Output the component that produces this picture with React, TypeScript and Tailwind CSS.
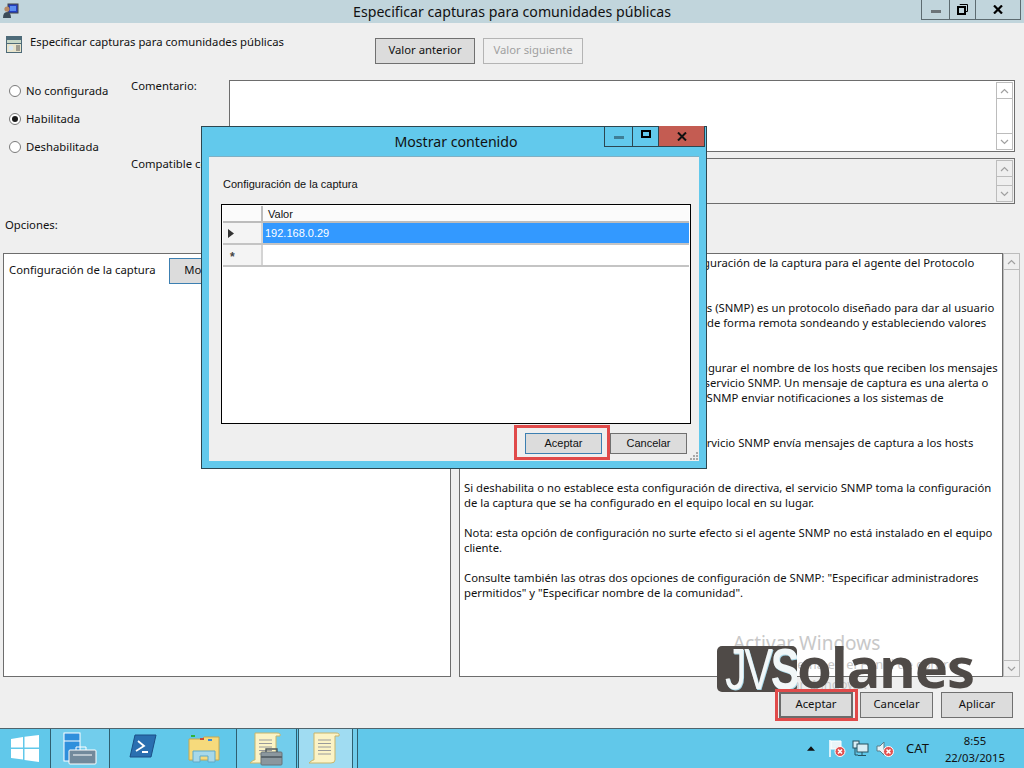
import React from "react";

const F = "[font-family:'Noto_Sans',sans-serif]";

function Chevron({ up }: { up?: boolean }) {
  return (
    <svg width="9" height="6" viewBox="0 0 9 6" fill="none" stroke="#a0a0a0" strokeWidth="1.2">
      <path d={up ? "M1 5 L4.5 1.5 L8 5" : "M1 1 L4.5 4.5 L8 1"} />
    </svg>
  );
}

function ScrollBar({ mid }: { mid?: string }) {
  return (
    <div className="flex h-full w-[17px] flex-col border border-[#bcbcbc]">
      <div className="flex h-[16px] shrink-0 items-center justify-center border-b border-[#bcbcbc]"><Chevron up /></div>
      <div className={`flex-1 ${mid ?? ""}`} />
      <div className="flex h-[16px] shrink-0 items-center justify-center border-t border-[#bcbcbc]"><Chevron /></div>
    </div>
  );
}

function Radio({ label, on }: { label: string; on?: boolean }) {
  return (
    <div className="flex h-[28px] items-center">
      <div className="ml-[9px] flex h-[12px] w-[12px] items-center justify-center rounded-full border border-[#7a7a7a] bg-white">
        {on && <div className="h-[6px] w-[6px] rounded-full bg-[#1a1a1a]" />}
      </div>
      <span className="ml-[5px] text-[11.3px]">{label}</span>
    </div>
  );
}

function Btn({ label, w, h = "h-[26px]", cls = "border-[#707070]" }: { label: string; w: string; h?: string; cls?: string }) {
  return (
    <div className={`flex ${w} ${h} shrink-0 items-center justify-center border bg-[#dcdcdc] pb-[1px] text-[11.3px] ${cls}`}>
      {label}
    </div>
  );
}

function Shield() {
  return (
    <g>
      <circle cx="0" cy="0" r="5" fill="#e2504f" stroke="#fff" strokeWidth="1" />
      <path d="M-2 -2 L2 2 M2 -2 L-2 2" stroke="#fff" strokeWidth="1.6" />
    </g>
  );
}

function ScriptIcon({ tool }: { tool?: boolean }) {
  return (
    <svg width="38" height="34" viewBox="0 0 38 34">
      <path d="M7 1 H29 Q33 1 32 4 H28 V28 Q28 31 24 31 H2 Q4 29 6 28 H7 Z" fill="#fbf3c6" stroke="#c9b56a" strokeWidth="1" />
      <path d="M11 8H24M11 11.5H24M11 15H24M11 18.5H24M11 22H24" stroke="#9a9a9a" strokeWidth="1" />
      {tool && (
        <g>
          <rect x="13" y="20" width="21" height="13" rx="1" fill="#8b979e" stroke="#687379" />
          <path d="M18 20 V17 H29 V20" fill="none" stroke="#4e575d" strokeWidth="1.4" />
          <rect x="13" y="24" width="21" height="2" fill="#5a656c" />
        </g>
      )}
    </svg>
  );
}

const descLines: (string | null)[] = [
  "La opción de directiva permite definir la configuración de la captura para el agente del Protocolo",
  "simple de administración de redes.",
  null,
  "El Protocolo simple de administración de redes (SNMP) es un protocolo diseñado para dar al usuario",
  "la capacidad de gestionar sitios y dispositivos de forma remota sondeando y estableciendo valores",
  "de terminales.",
  null,
  "La configuración de directivas le permite configurar el nombre de los hosts que reciben los mensajes",
  "de capturas de la comunidad enviados por el servicio SNMP. Un mensaje de captura es una alerta o",
  "un evento significativo que permite al agente SNMP enviar notificaciones a los sistemas de",
  "administración.",
  null,
  "Si habilita esa configuración de directiva, el servicio SNMP envía mensajes de captura a los hosts",
  "de la comunidad pública.",
  null,
  "Si deshabilita o no establece esta configuración de directiva, el servicio SNMP toma la configuración",
  "de la captura que se ha configurado en el equipo local en su lugar.",
  null,
  "Nota: esta opción de configuración no surte efecto si el agente SNMP no está instalado en el equipo",
  "cliente.",
  null,
  "Consulte también las otras dos opciones de configuración de SNMP: \"Especificar administradores",
  "permitidos\" y \"Especificar nombre de la comunidad\".",
];

function TaskBtn({ w, cls = "", children }: { w: string; cls?: string; children?: React.ReactNode }) {
  return <div className={`flex ${w} h-full shrink-0 items-center justify-center border-r border-[#2f5f70] ${cls}`}>{children}</div>;
}

export default function App() {
  return (
    <div className={`relative h-[768px] w-[1024px] overflow-hidden bg-[#efefef] text-[#111] ${F}`}>
      <div className="flex h-full flex-col">
        {/* title bar */}
        <div className="relative flex h-[23px] shrink-0 items-start justify-center bg-[#c1d5dc] text-[14.15px] leading-[23px]">
          <svg className="absolute left-[2px] top-[3px]" width="17" height="16" viewBox="0 0 17 16">
            <rect x="6" y="1" width="10" height="9" fill="#2440c0" stroke="#444" />
            <rect x="8" y="3" width="6" height="5" fill="#5a8cf0" />
            <circle cx="5" cy="6" r="2.6" fill="#b98a62" />
            <path d="M1 15 Q1 9 5 9 Q9 9 9 15 Z" fill="#3c4c58" />
          </svg>
          <span>Especificar capturas para comunidades públicas</span>
          <div className="absolute right-[3px] top-0 flex h-[20px] border-x border-b border-[#5d6b70]">
            <div className="flex w-[28px] items-center justify-center border-r border-[#5d6b70]">
              <div className="mt-[3px] h-[3px] w-[10px] bg-[#6c7478]" />
            </div>
            <div className="flex w-[26px] items-center justify-center border-r border-[#5d6b70]">
              <svg width="11" height="11" viewBox="0 0 11 11" fill="none" stroke="#000">
                <path d="M3 1 V0.5 H10.5 V7.5 H9" />
                <rect x="1" y="3" width="7" height="7" strokeWidth="2" />
              </svg>
            </div>
            <div className="flex w-[44px] items-center justify-center">
              <svg width="10" height="9" viewBox="0 0 10 9" stroke="#000" strokeWidth="2.2"><path d="M1 0.5 L9 8.5 M9 0.5 L1 8.5" /></svg>
            </div>
          </div>
        </div>

        {/* header row */}
        <div className="flex h-[57px] shrink-0">
          <div className="flex w-[375px] items-start pl-[6px] pt-[13px]">
            <svg width="16" height="17" viewBox="0 0 16 17">
              <rect x="0" y="0" width="16" height="17" fill="#4d6a78" />
              <rect x="1" y="4" width="14" height="3" fill="#c8d8c8" />
              <rect x="1" y="8" width="14" height="8" fill="#e8e4cc" />
              <circle cx="5" cy="12" r="2.4" fill="#d8e8f4" />
              <path d="M10 10H14M10 12H14M10 14H14" stroke="#555" />
            </svg>
            <span className="ml-[8px] mt-[-2px] text-[11.3px]">Especificar capturas para comunidades públicas</span>
          </div>
          <div className="flex gap-[8px] pt-[15px]">
            <Btn label="Valor anterior" w="w-[100px]" />
            <div className="flex h-[26px] w-[100px] items-center justify-center border border-[#b4b4b4] bg-[#f0f0f0] pb-[1px] text-[11.3px] text-[#a0a0a0]">Valor siguiente</div>
          </div>
        </div>

        {/* state + comments */}
        <div className="flex h-[125px] shrink-0">
          <div className="-mt-[3px] w-[131px]">
            <Radio label="No configurada" />
            <Radio label="Habilitada" on />
            <Radio label="Deshabilitada" />
          </div>
          <div className="-mt-[2px] flex w-[98px] flex-col text-[11.3px]">
            <div className="h-[78px]">Comentario:</div>
            <div>Compatible con:</div>
          </div>
          <div className="flex w-[786px] flex-col gap-[6px]">
            <div className="flex h-[72px] justify-end border border-[#6d6d6d] bg-white p-[1px]"><ScrollBar /></div>
            <div className="flex h-[46px] justify-end border border-[#6d6d6d] p-[1px]"><ScrollBar /></div>
          </div>
        </div>

        <div className="h-[48px] shrink-0 pl-[5px] pt-[12px] text-[11.3px]">Opciones:</div>

        {/* panels */}
        <div className="flex h-[424px] shrink-0 pl-[3px]">
          <div className="h-full w-[448px] border border-[#6d6d6d] bg-white">
            <div className="flex items-center bg-white pl-[5px] pt-[4px] text-[11.3px]">
              <span className="w-[160px] pb-[2px]">Configuración de la captura</span>
              <Btn label="Mostrar..." w="w-[80px]" cls="border-[#3c7fb1]" />
            </div>
          </div>
          <div className="ml-[8px] h-full w-[544px] border border-[#6d6d6d] bg-white pl-[4px] pt-[1px] text-[11.3px] leading-[15px]">
            {descLines.map((l, i) => (
              <div key={i} className="h-[15px] whitespace-nowrap">{l ?? "\u00a0"}</div>
            ))}
          </div>
          <div className="h-full w-[17px]"><ScrollBar /></div>
        </div>

        {/* bottom buttons */}
        <div className="flex flex-1 justify-end pr-[11px] pt-[15px]">
          <Btn label="Aceptar" w="w-[74px]" cls="border-2 border-[#6b6b6b]" />
          <Btn label="Cancelar" w="w-[73px] ml-[7px]" />
          <Btn label="Aplicar" w="w-[72px] ml-[8px]" />
        </div>

        {/* taskbar */}
        <div className="flex h-[40px] shrink-0 border-t border-[#50646c] bg-[#61c8ea]">
          <TaskBtn w="w-[51px]">
            <svg width="28" height="27" viewBox="0 0 28 27" fill="#fff">
              <path d="M0 4 L12 2 V12.5 H0 Z M13.5 1.8 L28 0 V12.5 H13.5 Z M0 14 H12 V24.5 L0 23 Z M13.5 14 H28 V27 L13.5 25 Z" />
            </svg>
          </TaskBtn>
          <TaskBtn w="w-[59px]" cls="bg-[#72cdec]">
            <svg width="34" height="33" viewBox="0 0 34 33">
              <rect x="1" y="1" width="16" height="28" fill="#2f8fdc" stroke="#fff" />
              <path d="M1 9 H17" stroke="#fff" />
              <rect x="6" y="18" width="27" height="14" rx="1" fill="#72899b" stroke="#fff" />
              <path d="M13 18 V15 H23 V18" fill="none" stroke="#fff" />
              <path d="M10 23 H29" stroke="#fff" />
            </svg>
          </TaskBtn>
          <TaskBtn w="w-[127px]">
            <div className="flex w-full justify-around pl-[3px]">
              <svg width="28" height="24" viewBox="0 0 28 24">
                <path d="M6 1 H27 L22 23 H1 Z" fill="#2a6fb0" stroke="#1b4f86" />
                <path d="M9 7 L15 12 L7 17 M13 18 H19" fill="none" stroke="#fff" strokeWidth="1.8" />
              </svg>
              <svg width="32" height="29" viewBox="0 0 32 29">
                <path d="M1 5 H14 L16 3 H31 V26 H1 Z" fill="#f6da7c" stroke="#c8a850" />
                <rect x="3" y="1" width="4" height="2" fill="#2fb43c" />
                <rect x="12" y="4" width="4" height="2" fill="#c84a3a" />
                <rect x="20" y="5" width="4" height="2" fill="#3c8ad8" />
                <path d="M5 28 V17 H27 V28 H20 V22 H12 V28 Z" fill="#a6d8ea" stroke="#5fa9c8" />
              </svg>
            </div>
          </TaskBtn>
          <TaskBtn w="w-[60px]" cls="bg-[#72cdec]"><ScriptIcon tool /></TaskBtn>
          <div className="h-full w-[2px] border-r border-[#2f5f70]" />
          <TaskBtn w="w-[54px]" cls="bg-[#a0dcf2]"><ScriptIcon /></TaskBtn>
          <TaskBtn w="w-[5px]" cls="bg-[#72cdec]" />
          <div className="flex flex-1 items-center justify-end">
            <svg width="8" height="5" viewBox="0 0 9 5" className="mr-[13px]"><path d="M0 5 L4.5 0 L9 5 Z" fill="#111" /></svg>
            <svg width="18" height="19" viewBox="0 0 18 19" className="mr-[6px]">
              <path d="M2 1 V18" stroke="#fff" strokeWidth="1.5" />
              <path d="M3 2 H13 V10 H3 Z" fill="#e8f4f8" stroke="#fff" />
              <g transform="translate(12 12.5)"><Shield /></g>
            </svg>
            <svg width="18" height="17" viewBox="0 0 18 17" fill="none" stroke="#26505e" className="mr-[6px]">
              <rect x="1" y="1" width="6" height="7" fill="#d8eef6" />
              <rect x="5" y="4" width="11" height="8" fill="#d8eef6" />
              <path d="M10 12 V15 M6 15.5 H14 M3 8 V15 H6" />
            </svg>
            <svg width="18" height="16" viewBox="0 0 18 16" className="mr-[12px]">
              <path d="M1 5 H4 L8 1 V14 L4 10 H1 Z" fill="#e8f4f8" stroke="#5a7c88" />
              <g transform="translate(12.5 10.5)"><Shield /></g>
            </svg>
            <span className="mr-[16px] text-[13px]">CAT</span>
            <div className="mr-[19px] flex flex-col items-center text-[11.3px] leading-[17px]">
              <span>8:55</span>
              <span>22/03/2015</span>
            </div>
          </div>
        </div>
      </div>

      {/* activation + watermark overlays */}
      <div className="absolute left-[733px] top-[632px] text-[#c8c8c8]">
        <div className="text-[19px] leading-[22px]">Activar Windows</div>
        <div className="text-[13px] leading-[20px]">Vaya a Sistema en el Panel de control</div>
        <div className="text-[13px] leading-[20px]">para activar Windows.</div>
      </div>
      <div className="absolute left-[717px] top-[646px] h-[46px] w-[80px] overflow-hidden rounded-[5px] bg-[#4f4a47]">
        <span className="absolute left-[8px] top-[-10px] origin-left scale-x-[0.74] whitespace-nowrap text-[58px] leading-[66px] tracking-[-3px] text-[#f2f7f8] [font-family:'Liberation_Sans',sans-serif] [text-shadow:1px_1px_0_#a8d8e8]">JV<span className="font-bold">S</span></span>
      </div>
      <div className="absolute left-[797px] top-[632px] text-[56px] font-bold leading-[68px] tracking-[-1px] text-[#4f4a47]">olanes</div>

      {/* red highlight */}
      <div className="absolute left-[775px] top-[689px] h-[32px] w-[83px] border-[3px] border-[#e04a4a]" />

      {/* dialog */}
      <div className="absolute left-[201px] top-[126px] flex h-[343px] w-[506px] flex-col border border-[#2c4650] bg-[#62c9ec] px-[7px] pb-[7px]">
        <div className="relative flex h-[29px] shrink-0 items-center justify-center text-[14.15px]">
          <span className="ml-[4px]">Mostrar contenido</span>
          <div className="absolute right-[-6px] top-[-1px] flex h-[21px] border border-t-0 border-[#2c4650]">
            <div className="flex w-[28px] items-center justify-center border-r border-[#2c4650]"><div className="mt-[3px] h-[3px] w-[10px] bg-[#3e7e96]" /></div>
            <div className="flex w-[26px] items-center justify-center border-r border-[#2c4650]"><div className="mb-[4px] h-[8px] w-[10px] border-2 border-black" /></div>
            <div className="flex w-[45px] items-center justify-center bg-[#c45c52]">
              <svg width="10" height="9" viewBox="0 0 10 9" stroke="#111" strokeWidth="2"><path d="M1 0.5 L9 8.5 M9 0.5 L1 8.5" /></svg>
            </div>
          </div>
        </div>
        <div className="relative flex flex-1 flex-col border-t border-[#7fb0c4] bg-[#efefef] pl-[12px] pr-[8px] [font-family:'Liberation_Sans',sans-serif]">
          <div className="h-[47px] pl-[2px] pt-[21px] text-[11px] leading-[13px]">Configuración de la captura</div>
          <div className="h-[220px] border border-black bg-white p-[1px] text-[11px]">
            <div className="flex h-[17px] border-b-2 border-[#bcbcbc] bg-[#fbfbfb]">
              <div className="w-[40px] border-r-2 border-[#bcbcbc]" />
              <div className="flex-1 pl-[5px] pt-[2px] leading-[13px]">Valor</div>
            </div>
            <div className="flex h-[22px] border-b-2 border-[#c4c4c4]">
              <div className="flex w-[40px] items-center border-r-2 border-[#d4d4d4] bg-[#f4f4f4] pl-[5px]">
                <svg width="6" height="9" viewBox="0 0 6 9"><path d="M0 0 L6 4.5 L0 9 Z" fill="#333" /></svg>
              </div>
              <div className="flex flex-1 items-center bg-[#3399ff] pl-[2px] text-white">192.168.0.29</div>
            </div>
            <div className="flex h-[22px] border-b-2 border-[#c4c4c4]">
              <div className="flex w-[40px] items-center border-r-2 border-[#d4d4d4] bg-[#f4f4f4] pl-[7px] pt-[4px]">
                <span className="text-[12px] font-bold leading-none text-[#444]">*</span>
              </div>
              <div className="flex-1" />
            </div>
          </div>
          <div className="flex justify-end gap-[8px] pr-[4px] pt-[9px] text-[11px]">
            <div className="flex h-[21px] w-[77px] items-center justify-center border border-[#3c7fb1] bg-[#dcdcdc]">Aceptar</div>
            <div className="flex h-[21px] w-[77px] items-center justify-center border border-[#707070] bg-[#dcdcdc]">Cancelar</div>
          </div>
          <div className="absolute left-[305px] top-[268px] h-[35px] w-[96px] border-[3px] border-[#e04a4a]" />
          <svg className="absolute bottom-[1px] right-[1px]" width="8" height="8" viewBox="0 0 8 8" fill="#a8a8a8">
            <rect x="6" y="0" width="2" height="2" /><rect x="3" y="3" width="2" height="2" /><rect x="6" y="3" width="2" height="2" />
            <rect x="0" y="6" width="2" height="2" /><rect x="3" y="6" width="2" height="2" /><rect x="6" y="6" width="2" height="2" />
          </svg>
        </div>
      </div>
    </div>
  );
}
